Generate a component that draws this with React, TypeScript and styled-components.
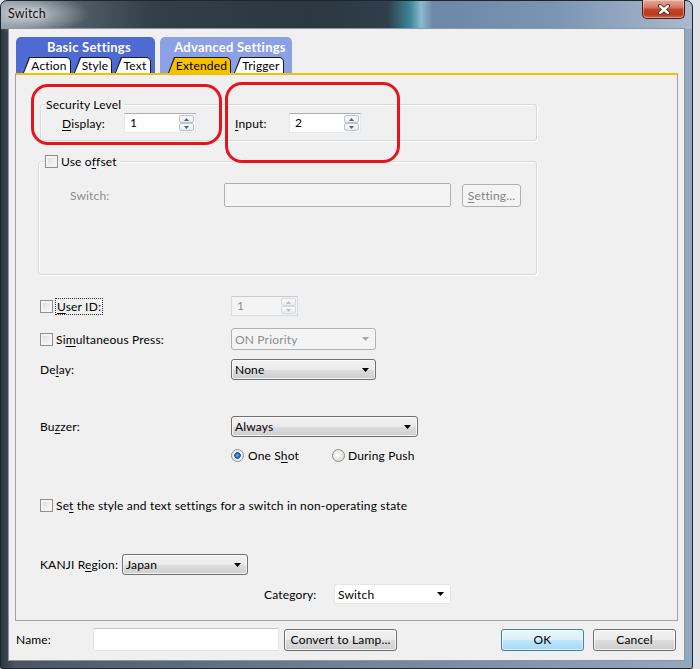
import React from "react";
import styled, { createGlobalStyle, css } from "styled-components";

const Global = createGlobalStyle`
  html, body { margin: 0; padding: 0; background: #dfe3e8; }
  body { font-family: Lato, "Liberation Sans", sans-serif; font-size: 12px; letter-spacing: 0.17px; color: #000; }
  * { box-sizing: border-box; }
`;

const Window = styled.div`
  position: relative;
  width: 693px;
  height: 669px;
  padding: 0 7px 7px 7px;
  display: flex;
  flex-direction: column;
  border: 1px solid #1d262e;
  border-radius: 7px 7px 2px 2px;
  background:
    radial-gradient(ellipse 60px 20px at 28px 13px, rgba(215, 222, 228, 0.8), rgba(215, 222, 228, 0) 100%) no-repeat,
    linear-gradient(90deg, #8b969f 0%, #5a666f 8%, #333f48 22%, #2b3741 45%, #2f3f4b 56%, #3d8698 59.2%, #8bbad0 60.8%, #6c88a6 62.5%, #7b94b2 80%, #a9bacd 100%) 0 0 / 100% 28px no-repeat,
    linear-gradient(90deg, #2c363e 0%, #4a5560 2%, #6f8298 50%, #93a7bf 100%);
`;

const TitleBar = styled.div`
  height: 27px;
  display: flex;
  justify-content: space-between;
  align-items: flex-start;
`;

const Title = styled.div`
  font-size: 12.5px;
  line-height: 26px;
  color: #111;
  text-shadow: 0 0 6px rgba(255, 255, 255, 0.9);
`;

const CloseButton = styled.div`
  width: 43px;
  height: 19px;
  margin-top: -1px;
  border: 1px solid #4e1a12;
  border-top: none;
  border-radius: 0 0 5px 5px;
  background: linear-gradient(#e6a898 0%, #d57a64 40%, #c44526 52%, #b73a1e 80%, #d0694f 100%);
  box-shadow: inset 0 0 0 1px rgba(255, 255, 255, 0.35);
  display: flex;
  align-items: center;
  justify-content: center;
`;

const Client = styled.div`
  flex: 1;
  display: flex;
  flex-direction: column;
  background: #f0f0f0;
  border: 1px solid #8997a6;
  padding: 8px 6px 9px 6px;
`;

const TabHeader = styled.div`
  display: flex;
  gap: 5px;
  margin-left: 1px;
  height: 36px;
`;

const TabGroup = styled.div<{ $w: number; $bg: string; $pad: number }>`
  width: ${(p) => p.$w}px;
  background: ${(p) => p.$bg};
  border-radius: 5px 5px 0 0;
  display: flex;
  flex-direction: column;
  padding-left: ${(p) => p.$pad}px;
`;

const GroupTitle = styled.div`
  height: 20px;
  line-height: 21px;
  text-align: center;
  font-weight: 700;
  color: #fff;
  font-size: 13px;
  letter-spacing: 0.25px;
`;

const SubTabs = styled.div`
  display: flex;
  gap: 3px;
  height: 16px;
`;

const SubTab = styled.div<{ $w: number }>`
  width: ${(p) => p.$w}px;
  height: 16px;
  background: #1a1a1a;
  border-radius: 0 5px 0 0;
  clip-path: polygon(6px 0, 100% 0, 100% 100%, 0 100%);
  padding: 1px 1px 0 1px;
`;

const SubTabFace = styled.div<{ $active?: boolean }>`
  height: 15px;
  background: ${(p) => (p.$active ? "#f6c200" : "#fff")};
  border-radius: 0 4px 0 0;
  clip-path: polygon(6px 0, 100% 0, 100% 100%, 0 100%);
  text-align: center;
  padding-left: 4px;
  line-height: 15px;
  font-size: 12px;
`;

const Panel = styled.div`
  height: 548px;
  border: 1px solid #a3a3a3;
  border-top: 2px solid #f5c000;
  background: #f0f0f0;
`;

const GroupBox = styled.fieldset<{ $ml: number; $mt: number; $w: number }>`
  margin: ${(p) => p.$mt}px 0 0 ${(p) => p.$ml}px;
  width: ${(p) => p.$w}px;
  padding: 0;
  min-width: 0;
  border: 1px solid #d5dadf;
  border-radius: 3px;
  box-shadow: inset 1px 1px 0 #fff, 1px 1px 0 #fff;
`;

const Legend = styled.legend<{ $ml: number }>`
  margin-left: ${(p) => p.$ml}px;
  padding: 0 3px 0 1px;
  line-height: 15px;
  display: flex;
  align-items: center;
  gap: 3px;
`;

const GroupRow = styled.div<{ $mt: number; $pl: number; $pb: number; $h: number }>`
  display: flex;
  align-items: center;
  height: ${(p) => p.$h}px;
  margin: ${(p) => p.$mt}px 0 ${(p) => p.$pb}px 0;
  padding-left: ${(p) => p.$pl}px;
`;

const Label = styled.div<{ $w?: number; $ml?: number; $disabled?: boolean }>`
  ${(p) => p.$w !== undefined && css`width: ${p.$w}px; flex: none;`}
  margin-left: ${(p) => p.$ml ?? 0}px;
  color: ${(p) => (p.$disabled ? "#8d8d8d" : "#000")};
  white-space: nowrap;
`;

const U = styled.span`
  text-decoration: underline;
  text-underline-offset: 2px;
`;

const Focus = styled.span`
  outline: 1px dotted #333;
  outline-offset: 0px;
  padding: 0 1px;
`;

const SpinBox = styled.div<{ $w: number; $disabled?: boolean }>`
  display: flex;
  flex: none;
  width: ${(p) => p.$w}px;
  height: 20px;
  background: ${(p) => (p.$disabled ? "#f3f3f3" : "#fff")};
  border: 1px solid ${(p) => (p.$disabled ? "#d9dce0" : "#e3e9ef")};
  border-top-color: ${(p) => (p.$disabled ? "#c8cbd0" : "#abadb3")};
  color: ${(p) => (p.$disabled ? "#8d8d8d" : "#000")};
`;

const SpinValue = styled.div`
  flex: 1;
  padding-left: 5px;
  line-height: 18px;
`;

const SpinButtons = styled.div`
  width: 16px;
  display: flex;
  flex-direction: column;
  padding: 1px 1px 1px 0;
`;

const SpinBtn = styled.div<{ $disabled?: boolean }>`
  flex: 1;
  display: flex;
  align-items: center;
  justify-content: center;
  border: 1px solid ${(p) => (p.$disabled ? "#d6d9dd" : "#bcc3cc")};
  border-radius: 2px;
  background: linear-gradient(#fcfcfc, #e7eaee);
`;

type ComboKind = "button" | "disabled" | "flat";

const Combo = styled.div<{ $w: number; $h: number; $kind: ComboKind }>`
  display: flex;
  flex: none;
  align-items: center;
  justify-content: space-between;
  width: ${(p) => p.$w}px;
  height: ${(p) => p.$h}px;
  padding: 0 6px 0 3px;
  border-radius: 3px;
  ${(p) =>
    p.$kind === "button"
      ? css`
          border: 1px solid #707070;
          background: linear-gradient(#f2f2f2 0%, #ebebeb 50%, #dddddd 51%, #cfcfcf 100%);
          box-shadow: inset 0 0 0 1px rgba(255, 255, 255, 0.7);
          color: #000;
        `
      : p.$kind === "disabled"
      ? css`
          border: 1px solid #adb2b5;
          background: #f4f4f4;
          color: #8d8d8d;
        `
      : css`
          border: 1px solid #e6e6e6;
          background: #fff;
          border-radius: 2px;
          color: #000;
        `}
`;

const TextBox = styled.div<{ $w: number; $h: number; $disabled?: boolean }>`
  flex: none;
  width: ${(p) => p.$w}px;
  height: ${(p) => p.$h}px;
  border-radius: 2px;
  background: ${(p) => (p.$disabled ? "#f4f4f4" : "#fff")};
  border: 1px solid ${(p) => (p.$disabled ? "#adb2b5" : "#e2e3ea")};
  border-top-color: ${(p) => (p.$disabled ? "#adb2b5" : "#c7c9ce")};
`;

const Button = styled.div<{ $w: number; $h: number; $kind?: "normal" | "default" | "disabled"; $ml?: number }>`
  flex: none;
  width: ${(p) => p.$w}px;
  height: ${(p) => p.$h}px;
  margin-left: ${(p) => p.$ml ?? 0}px;
  display: flex;
  align-items: center;
  justify-content: center;
  border-radius: 3px;
  white-space: nowrap;
  ${(p) =>
    p.$kind === "default"
      ? css`
          border: 1px solid #3c7fb1;
          background: linear-gradient(#eaf6fd 0%, #d9f0fc 50%, #bee6fd 51%, #a7d9f5 100%);
          box-shadow: inset 0 0 0 1px rgba(255, 255, 255, 0.6);
        `
      : p.$kind === "disabled"
      ? css`
          border: 1px solid #adb2b5;
          background: #f4f4f4;
          color: #838383;
        `
      : css`
          border: 1px solid #707070;
          background: linear-gradient(#f2f2f2 0%, #ebebeb 50%, #dddddd 51%, #cfcfcf 100%);
          box-shadow: inset 0 0 0 1px rgba(255, 255, 255, 0.7);
        `}
`;

const Check = styled.span`
  display: inline-block;
  flex: none;
  width: 13px;
  height: 13px;
  border: 1px solid #8e8f8f;
  background: linear-gradient(135deg, #d4d6d9 0%, #f0f0f0 60%, #fcfcfc 100%);
  box-shadow: inset 0 0 0 2px #f4f4f4;
`;

const Radio = styled.span<{ $on?: boolean }>`
  display: inline-block;
  flex: none;
  width: 13px;
  height: 13px;
  border-radius: 50%;
  border: 1px solid #8e8f8f;
  background: ${(p) =>
    p.$on
      ? "radial-gradient(circle at 50% 50%, #6fb6ee 0, #1c5ea3 2.5px, #1c5ea3 3px, #e9ecef 3.6px, #f6f6f6 100%)"
      : "radial-gradient(circle at 40% 40%, #ffffff 0, #e9e9e9 4px, #d6d6d6 100%)"};
`;

const Rows = styled.div`
  padding-left: 24px;
`;

const FormRow = styled.div<{ $mt: number; $h: number; $cols?: string }>`
  display: grid;
  grid-template-columns: ${(p) => p.$cols ?? "191px auto"};
  align-items: center;
  justify-items: start;
  height: ${(p) => p.$h}px;
  margin-top: ${(p) => p.$mt}px;
`;

const Inline = styled.div<{ $gap?: number; $w?: number }>`
  display: flex;
  align-items: center;
  gap: ${(p) => p.$gap ?? 3}px;
  ${(p) => p.$w !== undefined && css`width: ${p.$w}px;`}
`;

const Footer = styled.div`
  display: flex;
  align-items: center;
  height: 23px;
  margin-top: 7px;
  padding: 0 2px 0 1px;
`;

const Spacer = styled.div`
  flex: 1;
`;

const Annotation = styled.div<{ $x: number; $y: number; $w: number; $h: number }>`
  position: absolute;
  left: ${(p) => p.$x}px;
  top: ${(p) => p.$y}px;
  width: ${(p) => p.$w}px;
  height: ${(p) => p.$h}px;
  border: 3px solid #e8141c;
  border-radius: 17px;
  pointer-events: none;
`;

const DropArrow = ({ color = "#000" }: { color?: string }) => (
  <svg width="7" height="4" viewBox="0 0 7 4">
    <path d="M0 0H7L3.5 4Z" fill={color} />
  </svg>
);

const SpinArrow = ({ up, color }: { up?: boolean; color: string }) => (
  <svg width="5" height="3" viewBox="0 0 5 3">
    <path d={up ? "M0 3H5L2.5 0Z" : "M0 0H5L2.5 3Z"} fill={color} />
  </svg>
);

const Spin = ({ value, w, disabled }: { value: string; w: number; disabled?: boolean }) => {
  const c = disabled ? "#b9c0c9" : "#4d6185";
  return (
    <SpinBox $w={w} $disabled={disabled}>
      <SpinValue>{value}</SpinValue>
      <SpinButtons>
        <SpinBtn $disabled={disabled}>
          <SpinArrow up color={c} />
        </SpinBtn>
        <SpinBtn $disabled={disabled}>
          <SpinArrow color={c} />
        </SpinBtn>
      </SpinButtons>
    </SpinBox>
  );
};

export default function App() {
  return (
    <>
      <Global />
      <Window>
        <TitleBar>
          <Title>Switch</Title>
          <CloseButton>
            <svg width="14" height="11" viewBox="0 0 14 11">
              <path d="M3 2L11 9M11 2L3 9" stroke="#5a2a22" strokeWidth="4.2" strokeLinecap="round" />
              <path d="M3 2L11 9M11 2L3 9" stroke="#fff" strokeWidth="2.4" strokeLinecap="round" />
            </svg>
          </CloseButton>
        </TitleBar>
        <Client>
          <TabHeader>
            <TabGroup $w={139} $bg="#4f6bd3" $pad={7}>
              <GroupTitle>Basic Settings</GroupTitle>
              <SubTabs>
                <SubTab $w={48}>
                  <SubTabFace>Action</SubTabFace>
                </SubTab>
                <SubTab $w={38}>
                  <SubTabFace>Style</SubTabFace>
                </SubTab>
                <SubTab $w={36}>
                  <SubTabFace>Text</SubTabFace>
                </SubTab>
              </SubTabs>
            </TabGroup>
            <TabGroup $w={132} $bg="#8ca0e6" $pad={8}>
              <GroupTitle>Advanced Settings</GroupTitle>
              <SubTabs>
                <SubTab $w={63}>
                  <SubTabFace $active>Extended</SubTabFace>
                </SubTab>
                <SubTab $w={50}>
                  <SubTabFace>Trigger</SubTabFace>
                </SubTab>
              </SubTabs>
            </TabGroup>
          </TabHeader>

          <Panel>
            <GroupBox $ml={24} $mt={22} $w={497}>
              <Legend $ml={4}>Security Level</Legend>
              <GroupRow $mt={1} $pl={21} $pb={7} $h={20}>
                <Label $w={62}>
                  <U>D</U>isplay:
                </Label>
                <Spin value="1" w={72} />
                <Label $w={54} $ml={39}>
                  <U>I</U>nput:
                </Label>
                <Spin value="2" w={72} />
              </GroupRow>
            </GroupBox>

            <GroupBox $ml={22} $mt={13} $w={499}>
              <Legend $ml={5}>
                <Check />
                <span>
                  Use o<U>f</U>fset
                </span>
              </Legend>
              <GroupRow $mt={14} $pl={31} $pb={67} $h={24}>
                <Label $w={154} $disabled>
                  Switch:
                </Label>
                <TextBox $w={227} $h={24} $disabled />
                <Button $w={59} $h={23} $kind="disabled" $ml={11}>
                  <span>
                    <U>S</U>etting...
                  </span>
                </Button>
              </GroupRow>
            </GroupBox>

            <Rows>
              <FormRow $mt={21} $h={20}>
                <Inline>
                  <Check />
                  <Focus>
                    <U>U</U>ser ID:
                  </Focus>
                </Inline>
                <Spin value="1" w={67} disabled />
              </FormRow>
              <FormRow $mt={12} $h={22}>
                <Inline>
                  <Check />
                  <span>
                    Si<U>m</U>ultaneous Press:
                  </span>
                </Inline>
                <Combo $w={145} $h={22} $kind="disabled">
                  <span>ON Priority</span>
                  <DropArrow color="#a9a9a9" />
                </Combo>
              </FormRow>
              <FormRow $mt={9} $h={21}>
                <Label>
                  De<U>l</U>ay:
                </Label>
                <Combo $w={145} $h={21} $kind="button">
                  <span>None</span>
                  <DropArrow />
                </Combo>
              </FormRow>
              <FormRow $mt={36} $h={21}>
                <Label>
                  Bu<U>z</U>zer:
                </Label>
                <Combo $w={187} $h={21} $kind="button">
                  <span>Always</span>
                  <DropArrow />
                </Combo>
              </FormRow>
              <FormRow $mt={11} $h={14}>
                <span />
                <Inline $gap={0}>
                  <Inline $w={101} $gap={4}>
                    <Radio $on />
                    <span>
                      One S<U>h</U>ot
                    </span>
                  </Inline>
                  <Inline $gap={3}>
                    <Radio />
                    <span>During Push</span>
                  </Inline>
                </Inline>
              </FormRow>
              <FormRow $mt={36} $h={14} $cols="auto">
                <Inline>
                  <Check />
                  <span>
                    Se<U>t</U> the style and text settings for a switch in non-operating state
                  </span>
                </Inline>
              </FormRow>
              <FormRow $mt={42} $h={21} $cols="82px auto">
                <Label>
                  KANJI R<U>e</U>gion:
                </Label>
                <Combo $w={126} $h={21} $kind="button">
                  <span>Japan</span>
                  <DropArrow />
                </Combo>
              </FormRow>
              <FormRow $mt={9} $h={20} $cols="224px 70px auto">
                <span />
                <Label>Category:</Label>
                <Combo $w={117} $h={20} $kind="flat">
                  <span>Switch</span>
                  <DropArrow />
                </Combo>
              </FormRow>
            </Rows>
          </Panel>

          <Footer>
            <Label $w={77}>Name:</Label>
            <TextBox $w={186} $h={23} />
            <Button $w={113} $h={22} $ml={5}>
              Convert to Lamp...
            </Button>
            <Spacer />
            <Button $w={83} $h={22} $kind="default">
              OK
            </Button>
            <Button $w={83} $h={22} $ml={9}>
              Cancel
            </Button>
          </Footer>
        </Client>

        <Annotation $x={30} $y={83} $w={191} $h={61} />
        <Annotation $x={224} $y={81} $w={175} $h={81} />
      </Window>
    </>
  );
}
